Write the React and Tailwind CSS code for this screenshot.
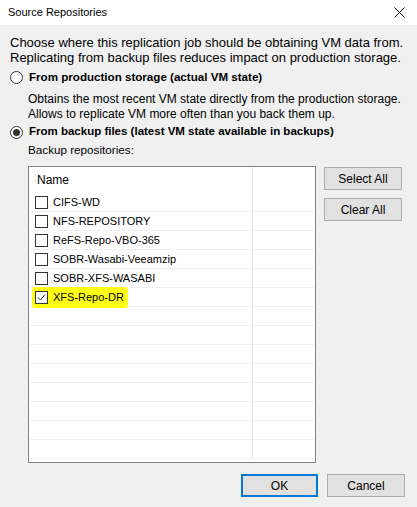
import { useState } from "react";

const repos = [
  "CIFS-WD",
  "NFS-REPOSITORY",
  "ReFS-Repo-VBO-365",
  "SOBR-Wasabi-Veeamzip",
  "SOBR-XFS-WASABI",
  "XFS-Repo-DR",
];

function Radio({ checked }) {
  return (
    <span className="w-[13px] h-[13px] rounded-full border border-[#333] bg-white flex items-center justify-center shrink-0">
      {checked && <span className="w-[7px] h-[7px] rounded-full bg-[#333]" />}
    </span>
  );
}

function Checkbox({ checked }) {
  return (
    <span className="w-[13px] h-[13px] border border-[#333] bg-white flex items-center justify-center shrink-0">
      {checked && (
        <svg width="11" height="11" viewBox="0 0 11 11">
          <path d="M2 5.5 L4.5 8 L9 2.5" fill="none" stroke="#333" strokeWidth="1" />
        </svg>
      )}
    </span>
  );
}

export default function App() {
  const [checked] = useState({ "XFS-Repo-DR": true });

  return (
    <div
      className="w-[417px] h-[507px] bg-[#f0f0f0] text-[12px] text-black overflow-hidden flex flex-col"
      style={{ fontFamily: "'Liberation Sans', Arial, sans-serif" }}
    >
      {/* ================= TITLE ================= */}
      <div className="h-[25px] bg-white flex items-center justify-between pl-[8px] pr-[12px] shrink-0">
        <span className="text-[11px]">Source Repositories</span>
        <svg width="11" height="11" viewBox="0 0 11 11">
          <path d="M0.5 0.5 L10.5 10.5 M10.5 0.5 L0.5 10.5" stroke="#000" strokeWidth="1" />
        </svg>
      </div>

      {/* ================= BODY ================= */}
      <div className="flex flex-col pl-[10px] pt-[10px]">
        <p className="leading-[15px] text-[13px]">
          Choose where this replication job should be obtaining VM data from.
          <br />
          Replicating from backup files reduces impact on production storage.
        </p>

        <div className="flex items-center gap-[6px] h-[18px] mt-[3px]">
          <Radio />
          <span className="font-bold text-[11.6px]">From production storage (actual VM state)</span>
        </div>

        <p className="leading-[15px] pl-[18px] mt-[6px]">
          Obtains the most recent VM state directly from the production storage.
          <br />
          Allows to replicate VM more often than you back them up.
        </p>

        <div className="flex items-center gap-[6px] h-[18px] mt-[1px]">
          <Radio checked />
          <span className="font-bold text-[11.5px]">From backup files (latest VM state available in backups)</span>
        </div>

        <p className="pl-[18px] h-[18px] leading-[18px] text-[11.7px]">Backup repositories:</p>

        <div className="flex gap-[8px] pl-[18px] mt-[7px]">
          {/* ================= LIST ================= */}
          <div className="w-[288px] h-[297px] border border-[#828282] bg-white overflow-hidden relative">
            <div className="absolute top-0 bottom-[4px] left-[223px] w-px bg-[#e8e8e8]" />

            <div className="h-[26px] flex items-center pl-[8px]">Name</div>

            {repos.map((name) => (
              <div key={name} className="h-[19px] mx-[1px] border-b border-[#f0f0f0] flex items-center pl-[5px] text-[11px]">
                <span
                  className={
                    checked[name]
                      ? "flex items-center gap-[5px] bg-[#ffff14] pl-[3px] pr-[4px] h-[21px] -ml-[3px] rounded-[4px]"
                      : "flex items-center gap-[5px]"
                  }
                >
                  <Checkbox checked={checked[name]} />
                  <span>{name}</span>
                </span>
              </div>
            ))}

            {Array.from({ length: 8 }).map((_, i) => (
              <div key={i} className="h-[19px] mx-[1px] border-b border-[#f0f0f0]" />
            ))}
          </div>

          {/* ================= SIDE BUTTONS ================= */}
          <div className="flex flex-col gap-[8px] pt-[1px]">
            <button className="w-[78px] h-[23px] bg-[#e1e1e1] border border-[#adadad]">
              Select All
            </button>
            <button className="w-[78px] h-[23px] bg-[#e1e1e1] border border-[#adadad]">
              Clear All
            </button>
          </div>
        </div>
      </div>

      {/* ================= FOOTER ================= */}
      <div className="flex justify-end gap-[9px] pr-[12px] mt-[11px]">
        <button className="w-[77px] h-[23px] bg-[#e1e1e1] border-2 border-[#0078d7]">OK</button>
        <button className="w-[78px] h-[23px] bg-[#e1e1e1] border border-[#adadad]">Cancel</button>
      </div>
    </div>
  );
}
